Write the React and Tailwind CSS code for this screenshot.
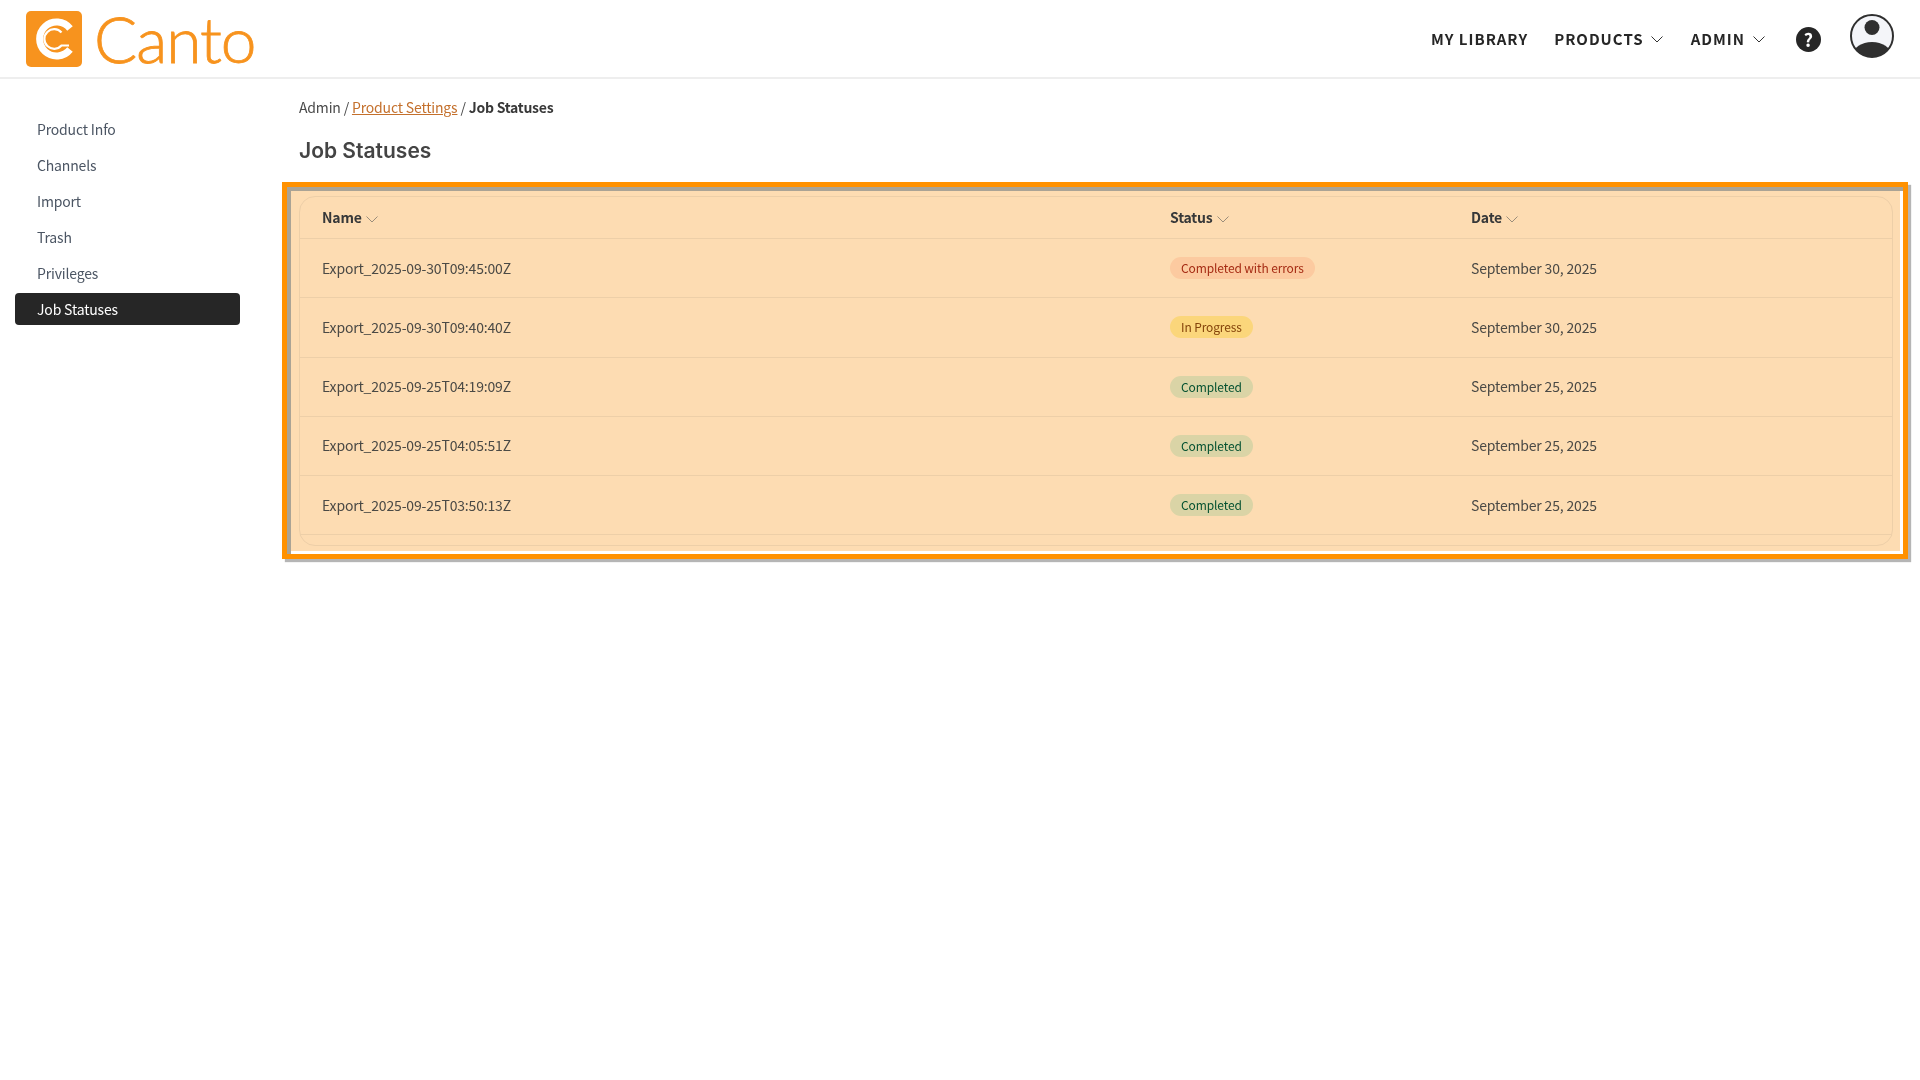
const sans = "font-['Noto_Sans_CJK_JP','Noto_Sans',sans-serif]"

const sideItems = ["Product Info", "Channels", "Import", "Trash", "Privileges", "Job Statuses"]

const jobs = [
  { name: "Export_2025-09-30T09:45:00Z", status: "Completed with errors", date: "September 30, 2025" },
  { name: "Export_2025-09-30T09:40:40Z", status: "In Progress", date: "September 30, 2025" },
  { name: "Export_2025-09-25T04:19:09Z", status: "Completed", date: "September 25, 2025" },
  { name: "Export_2025-09-25T04:05:51Z", status: "Completed", date: "September 25, 2025" },
  { name: "Export_2025-09-25T03:50:13Z", status: "Completed", date: "September 25, 2025" },
]

const badgeStyles = {
  "Completed with errors": "bg-[#feebe5] text-[#a8321c]",
  "In Progress": "bg-[#fdf9b0] text-[#854d0e]",
  Completed: "bg-[#dcf6ee] text-[#065f46]",
}

const Chevron = ({ className }) => (
  <svg viewBox="0 0 12 7" fill="none" className={className}>
    <polyline points="0.5,0.5 6,6 11.5,0.5" stroke="currentColor" strokeWidth="1" />
  </svg>
)

const Logo = () => (
  <div className="flex items-center">
    <svg viewBox="0 0 56 56" className="w-14 h-14">
      <rect width="56" height="56" rx="5" fill="#f7931e" />
      <path d="M44 17.5 A17 17 0 1 0 44 38.5" fill="none" stroke="#fff" strokeWidth="7" />
      <path d="M35.5 21.5 A9.8 9.8 0 1 0 35.5 34.5 L43 34.5" fill="none" stroke="#fff" strokeWidth="2.2" />
    </svg>
    <span className="ml-[12px] font-['Lato',sans-serif] font-light text-[64px] leading-none tracking-[-1px] text-[#f7931e] [-webkit-text-stroke:0.8px_#f7931e]">
      Canto
    </span>
  </div>
)

const Avatar = () => (
  <svg viewBox="0 0 44 44" className="w-11 h-11">
    <defs>
      <clipPath id="avatar-clip">
        <circle cx="22" cy="22" r="21" />
      </clipPath>
    </defs>
    <circle cx="22" cy="22" r="21" fill="#f4f5f9" />
    <circle cx="22" cy="13.5" r="7.5" fill="#2f2f2f" />
    <ellipse cx="22" cy="41" rx="19" ry="13" fill="#2f2f2f" clipPath="url(#avatar-clip)" />
    <circle cx="22" cy="22" r="21" fill="none" stroke="#2f2f2f" strokeWidth="2" />
  </svg>
)

export default function App() {
  return (
    <div className={`min-h-[1080px] bg-white ${sans}`}>
      {/* Header */}
      <header className="h-[79px] border-b-2 border-[#eeeeee] flex items-center justify-between pl-[26px] pr-[26px]">
        <Logo />
        <nav className="flex items-center pt-[2px] text-[15px] font-semibold tracking-[1px] text-[#262626]">
          <span>MY LIBRARY</span>
          <span className="ml-[26px]">PRODUCTS</span>
          <Chevron className="w-3 h-[7px] ml-[7px] text-[#333]" />
          <span className="ml-[28px]">ADMIN</span>
          <Chevron className="w-3 h-[7px] ml-[8px] text-[#333]" />
          <span className="ml-[31px] w-[25px] h-[25px] rounded-full bg-[#262626] text-white flex items-center justify-center text-[18px] font-bold tracking-normal">
            ?
          </span>
          <span className="ml-[29px] -mt-[8px]">
            <Avatar />
          </span>
        </nav>
      </header>

      <div className="flex">
        {/* Sidebar */}
        <aside className="w-[299px] pl-[15px] pt-[34px] shrink-0">
          <ul className="w-[225px] flex flex-col gap-1 text-[14px] tracking-[-0.17px] text-[#4b5563]">
            {sideItems.map((item) => (
              <li
                key={item}
                className={`h-8 flex items-center pl-[22px] rounded ${
                  item === "Job Statuses" ? "bg-[#262626] text-white" : ""
                }`}
              >
                {item}
              </li>
            ))}
          </ul>
        </aside>

        {/* Main */}
        <main className="flex-1 pr-[27px] pt-[17px]">
          <div className="text-[14px] tracking-[-0.17px] leading-[22px] text-[#4a4a4a]">
            Admin / <a className="text-[#c4702c] underline">Product Settings</a> /{" "}
            <span className="font-semibold tracking-[-0.25px] text-[#383838]">Job Statuses</span>
          </div>
          <h1 className="mt-[19px] font-['Inter',sans-serif] font-semibold text-[21px] leading-[28px] text-[#444444]">
            Job Statuses
          </h1>

          <div className="relative mt-[31px]">
            <div className="border border-[#eff0f1] rounded-2xl pb-[10px] text-[14px] tracking-[-0.17px] text-[#4b5563]">
              <div className="grid grid-cols-[848px_301px_1fr] h-[42px] items-center border-b border-[#eff0f1] pl-[22px] font-semibold text-[#374151]">
                <div className="flex items-center gap-1">
                  Name
                  <Chevron className="w-3 h-[7px] mt-[3px] text-[#9ca3af]" />
                </div>
                <div className="flex items-center gap-1">
                  Status
                  <Chevron className="w-3 h-[7px] mt-[3px] text-[#9ca3af]" />
                </div>
                <div className="flex items-center gap-1">
                  Date
                  <Chevron className="w-3 h-[7px] mt-[3px] text-[#9ca3af]" />
                </div>
              </div>
              {jobs.map((job) => (
                <div
                  key={job.name}
                  className="grid grid-cols-[848px_301px_1fr] h-[59.25px] items-center border-b border-[#eff0f1] pl-[22px]"
                >
                  <div>{job.name}</div>
                  <div>
                    <span
                      className={`inline-flex items-center h-[22px] px-[11px] rounded-full text-[12px] tracking-[-0.12px] ${badgeStyles[job.status]}`}
                    >
                      {job.status}
                    </span>
                  </div>
                  <div>{job.date}</div>
                </div>
              ))}
            </div>

            {/* Highlight overlay */}
            <div className="absolute -left-[17px] -top-[14px] -right-[15px] -bottom-[13px] border-[5px] border-[#ff9100] bg-[#fddcb2] mix-blend-multiply shadow-[3px_3px_1px_#b5b5b5,inset_4px_4px_0_#aaa395,inset_-3px_-3px_0_#ffffff]" />
          </div>
        </main>
      </div>
    </div>
  )
}
